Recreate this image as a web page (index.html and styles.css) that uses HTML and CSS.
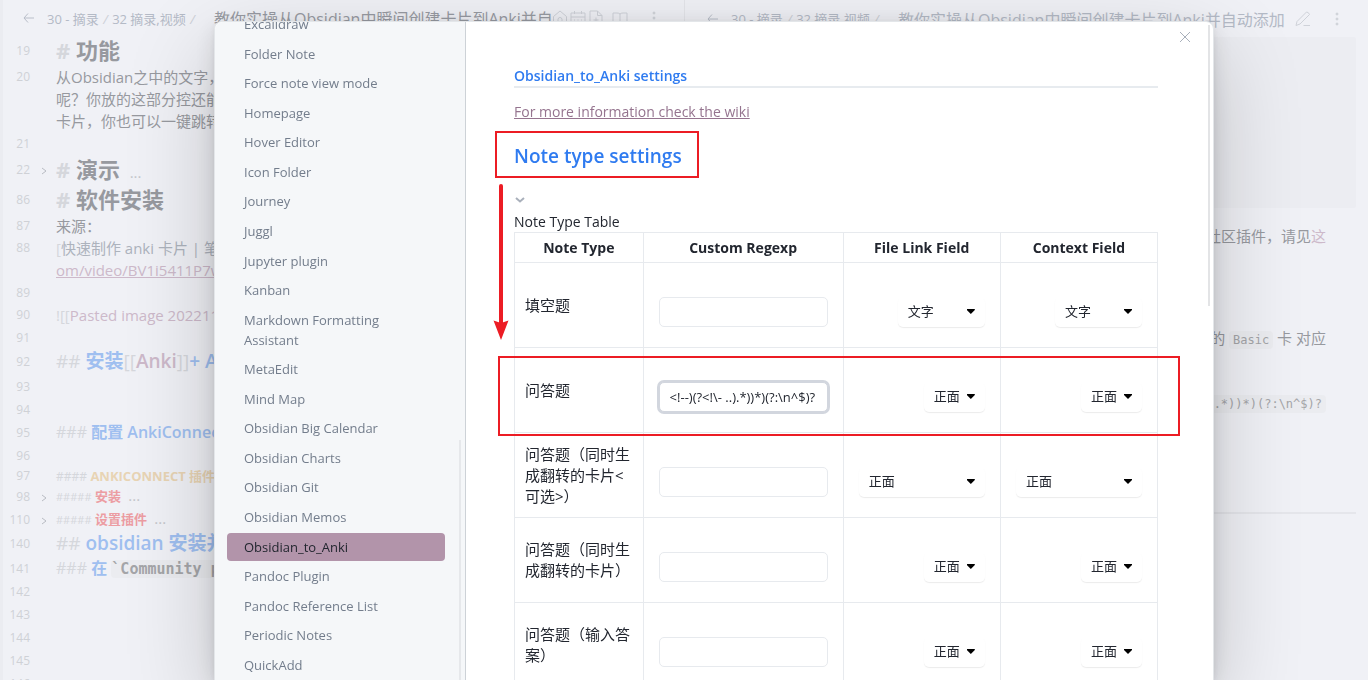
FILE: index.html
```html
<!DOCTYPE html>
<html lang="zh-CN">
<head>
<meta charset="utf-8">
<title>Obsidian_to_Anki settings</title>
<link rel="stylesheet" href="styles.css">
</head>
<body>
<div class="workspace">
  <section class="pane pane-left">
    <header class="pane-head">
      <svg class="icon back" viewBox="0 0 12 12"><path d="M11 6H1M5 1.500L1 6l4 4.500"/></svg>
      <span class="crumbs">30 - 摘录 <i>/</i> 32 摘录,视频 <i>/</i></span>
      <span class="pane-title">教你实操从Obsidian中瞬间创建卡片到Anki并自</span>
      <span class="pane-icons">
        <svg class="icon" viewBox="0 0 16 16"><path d="M1.500 6.500L8 1l6.500 5.500V15h-13zM6 15V9.500a2 2 0 0 1 4 0V15"/></svg>
        <svg class="icon" viewBox="0 0 16 16"><path d="M1 3h14v12H1zM1 7h14M4.500 1v3M11.500 1v3M4 10h1M7.500 10h1M11 10h1M4 12.500h1M7.500 12.500h1"/></svg>
        <svg class="icon" viewBox="0 0 16 16"><path d="M9.500 1H2v14h12V5.500zM9.500 1v4.500H14M8 7.500v5M5.500 10h5"/></svg>
        <svg class="icon book" viewBox="0 0 16 16"><path d="M8 4v11M8 4Q7 3 5 3H1v11h4.500Q7 14 8 15q1-1 2.500-1H15V3h-4Q9 3 8 4z"/></svg>
        <svg class="icon dots" viewBox="0 0 16 16"><circle cx="8" cy="3" r="1"/><circle cx="8" cy="8" r="1"/><circle cx="8" cy="13" r="1"/></svg>
      </span>
    </header>
    <div class="editor">
      <div class="line h1"><span class="num">19</span><p><b>#</b> 功能</p></div>
      <div class="line"><span class="num">20</span><p>从Obsidian之中的文字，<br>呢？你放的这部分控还能<br>卡片，你也可以一键跳转</p></div>
      <div class="line blank"><span class="num">21</span></div>
      <div class="line h1"><span class="num">22</span><svg class="fold" viewBox="0 0 6 8"><path d="M1 1l4 3-4 3"/></svg><p><b>#</b> 演示 <small>...</small></p></div>
      <div class="line h1"><span class="num">86</span><p><b>#</b> 软件安装</p></div>
      <div class="line"><span class="num">87</span><p>来源：</p></div>
      <div class="line link"><span class="num">88</span><p><b>[</b>快速制作 anki 卡片 | 笔记<br><a href="#video">om/video/BV1i5411P7w</a></p></div>
      <div class="line blank"><span class="num">89</span></div>
      <div class="line"><span class="num">90</span><p><b>![[</b><span class="ref">Pasted image 20221120</span></p></div>
      <div class="line blank"><span class="num">91</span></div>
      <div class="line h2"><span class="num">92</span><p><b>##</b> 安装<b>[[</b><span class="ref">Anki</span><b>]]</b>+ Anki</p></div>
      <div class="line blank"><span class="num">93</span></div>
      <div class="line blank"><span class="num">94</span></div>
      <div class="line h3"><span class="num">95</span><p><b>###</b> 配置 AnkiConnect</p></div>
      <div class="line blank"><span class="num">96</span></div>
      <div class="line h4"><span class="num">97</span><p><b>####</b> ANKICONNECT 插件</p></div>
      <div class="line h5"><span class="num">98</span><svg class="fold" viewBox="0 0 6 8"><path d="M1 1l4 3-4 3"/></svg><p><b>#####</b> 安装 <small>...</small></p></div>
      <div class="line h5"><span class="num">110</span><svg class="fold" viewBox="0 0 6 8"><path d="M1 1l4 3-4 3"/></svg><p><b>#####</b> 设置插件 <small>...</small></p></div>
      <div class="line h2"><span class="num">140</span><p><b>##</b> obsidian 安装并</p></div>
      <div class="line h3"><span class="num">141</span><p><b>###</b> 在 <code>`Community p</code></p></div>
      <div class="line blank"><span class="num">142</span></div>
      <div class="line blank"><span class="num">143</span></div>
      <div class="line blank"><span class="num">144</span></div>
      <div class="line blank"><span class="num">145</span></div>
      <div class="line blank"><span class="num">146</span></div>
    </div>
  </section>
  <section class="pane pane-right">
    <header class="pane-head">
      <svg class="icon back" viewBox="0 0 12 12"><path d="M11 6H1M5 1.500L1 6l4 4.500"/></svg>
      <span class="crumbs">30 - 摘录 <i>/</i> 32 摘录,视频 <i>/</i></span>
      <span class="pane-title">教你实操从Obsidian中瞬间创建卡片到Anki并自动添加</span>
      <span class="pane-icons">
        <svg class="icon" viewBox="0 0 16 16"><path d="M1 14.500l1-4L11.500 1q2 0 3 2.500L5 13zM8.500 14.500H15"/></svg>
        <svg class="icon dots" viewBox="0 0 16 16"><circle cx="8" cy="3" r="1"/><circle cx="8" cy="8" r="1"/><circle cx="8" cy="13" r="1"/></svg>
      </span>
    </header>
    <div class="preview">
      <div class="embed"></div>
      <p class="para">社区插件，请见<span class="ref">这</span></p>
      <p class="para">的 <code>Basic</code> 卡 对应</p>
      <p class="para"><code>.*))*)(?:\n^$)?</code></p>
      <hr>
    </div>
  </section>
</div>

<div class="overlay">
  <div class="modal" role="dialog" aria-label="Settings">
    <nav class="sidebar">
      <ul class="plugins">
        <li><a href="#p1">Excalidraw</a></li>
        <li><a href="#p2">Folder Note</a></li>
        <li><a href="#p3">Force note view mode</a></li>
        <li><a href="#p4">Homepage</a></li>
        <li><a href="#p5">Hover Editor</a></li>
        <li><a href="#p6">Icon Folder</a></li>
        <li><a href="#p7">Journey</a></li>
        <li><a href="#p8">Juggl</a></li>
        <li><a href="#p9">Jupyter plugin</a></li>
        <li><a href="#p10">Kanban</a></li>
        <li><a href="#p11">Markdown Formatting<br>Assistant</a></li>
        <li><a href="#p12">MetaEdit</a></li>
        <li><a href="#p13">Mind Map</a></li>
        <li><a href="#p14">Obsidian Big Calendar</a></li>
        <li><a href="#p15">Obsidian Charts</a></li>
        <li><a href="#p16">Obsidian Git</a></li>
        <li><a href="#p17">Obsidian Memos</a></li>
        <li><a href="#p18" class="active">Obsidian_to_Anki</a></li>
        <li><a href="#p19">Pandoc Plugin</a></li>
        <li><a href="#p20">Pandoc Reference List</a></li>
        <li><a href="#p21">Periodic Notes</a></li>
        <li><a href="#p22">QuickAdd</a></li>
      </ul>
      <span class="side-thumb"></span>
    </nav>
    <main class="content">
      <h2 class="title">Obsidian_to_Anki settings</h2>
      <a class="wiki" href="#wiki">For more information check the wiki</a>
      <h3 class="section">Note type settings</h3>
      <button class="collapse" aria-label="Collapse"><svg viewBox="0 0 10 6"><path d="M1 1l4 3.500L9 1"/></svg></button>
      <table class="types">
        <caption>Note Type Table</caption>
        <colgroup><col class="c-type"><col class="c-regexp"><col><col></colgroup>
        <thead><tr><th>Note Type</th><th>Custom Regexp</th><th>File Link Field</th><th>Context Field</th></tr></thead>
        <tbody>
          <tr><td>填空题</td><td class="ctl"><input type="text" aria-label="填空题 regexp"></td>
            <td class="ctl"><span class="drop mid"><select aria-label="File link"><option>文字</option></select></span></td>
            <td class="ctl"><span class="drop mid"><select aria-label="Context"><option>文字</option></select></span></td></tr>
          <tr><td>问答题</td><td class="ctl"><input class="focus" type="text" aria-label="问答题 regexp" value="&lt;!--)(?&lt;!\- ..).*))*)(?:\n^$)?"></td>
            <td class="ctl"><span class="drop"><select aria-label="File link"><option>正面</option></select></span></td>
            <td class="ctl"><span class="drop"><select aria-label="Context"><option>正面</option></select></span></td></tr>
          <tr><td>问答题（同时生成翻转的卡片&lt;可选&gt;）</td><td class="ctl"><input type="text" aria-label="可选 regexp"></td>
            <td class="ctl"><span class="drop wide"><select aria-label="File link"><option>正面</option></select></span></td>
            <td class="ctl"><span class="drop wide"><select aria-label="Context"><option>正面</option></select></span></td></tr>
          <tr><td>问答题（同时生成翻转的卡片）</td><td class="ctl"><input type="text" aria-label="翻转 regexp"></td>
            <td class="ctl"><span class="drop"><select aria-label="File link"><option>正面</option></select></span></td>
            <td class="ctl"><span class="drop"><select aria-label="Context"><option>正面</option></select></span></td></tr>
          <tr><td>问答题（输入答案）</td><td class="ctl"><input type="text" aria-label="输入 regexp"></td>
            <td class="ctl"><span class="drop"><select aria-label="File link"><option>正面</option></select></span></td>
            <td class="ctl"><span class="drop"><select aria-label="Context"><option>正面</option></select></span></td></tr>
        </tbody>
      </table>
    </main>
    <button class="close" aria-label="Close"><svg viewBox="0 0 12 12"><path d="M1 1l10 10M11 1L1 11"/></svg></button>
    <span class="main-thumb"></span>
    <span class="mark mark-title"></span>
    <span class="mark mark-row"></span>
    <svg class="mark-arrow" viewBox="0 0 16 156"><path d="M8 2v140" stroke-width="4" stroke-linecap="round"/><path class="head" d="M0.500 136.500L8 139l7.500-2.500L8 156z"/></svg>
  </div>
</div>
</body>
</html>
```

FILE: styles.css
```css
* { box-sizing: border-box; }

body {
  margin: 0;
  height: 100vh;
  overflow: hidden;
  background: #f0f1f6;
  color: #22262f;
  font-family: "Open Sans", "Noto Sans CJK SC", sans-serif;
  font-size: 15px;
}

p, ul { margin: 0; padding: 0; }
svg { display: block; fill: none; stroke: currentColor; }

/* Workspace behind the dialog */
.workspace {
  display: grid;
  grid-template-columns: 1fr 1fr;
  height: 100vh;
  color: #97999f;
}
.pane { min-width: 0; overflow: hidden; }
.pane-left { border-left: 3px solid #ebecf1; }
.pane-right { border-left: 1px solid #e4e5ea; }
.pane-head {
  display: flex;
  align-items: center;
  height: 36px;
  padding: 0 20px;
  white-space: nowrap;
  color: #b4bac6;
}
.pane-right .pane-head { height: 37px; padding: 0 22px; }
.icon { width: 16px; height: 16px; flex: none; color: #cfd2d9; }
.icon.back { width: 12px; height: 12px; color: #b9bec9; }
.crumbs { margin-left: 12px; width: 167px; flex: none; font-size: 13px; }
.crumbs i { margin: 0 1px; color: #cdd0d7; }
.pane-title { font-size: 16px; overflow: hidden; }
.pane-left .pane-title { width: 338px; flex: none; color: #989ba3; }
.pane-icons { display: flex; gap: 2px; }
.pane-icons .book { margin-left: 6px; }
.pane-icons .dots { margin-left: 16px; fill: currentColor; }
.pane-right .pane-icons { margin-left: 10px; }

.editor { width: 400px; white-space: nowrap; }
.line { display: flex; position: relative; line-height: 22px; padding-left: 53px; }
.num {
  position: absolute;
  left: 0;
  top: 0;
  bottom: 0;
  display: flex;
  align-items: center;
  justify-content: flex-end;
  width: 27px;
  max-height: 30px;
  font-size: 12px;
  font-weight: 400;
  color: #cfd1d6;
}
.line:not([class*=" "]) .num, .link .num { max-height: 22px; }
.line b { font-weight: inherit; color: #d5d7dc; }
.line small { margin-left: 4px; font-size: 15px; line-height: 1; color: #c4c6cb; font-weight: 400; }
.blank { height: 23px; }
.fold { position: absolute; left: 38px; top: 50%; width: 6px; height: 8px; margin-top: -3px; color: #b9bcc3; }
.h1 { height: 30px; line-height: 28px; font-size: 22px; font-weight: 700; }
.h2 { height: 26px; line-height: 24px; font-size: 19px; font-weight: 600; color: #9fbff0; }
.h3 { height: 23px; line-height: 22px; font-size: 16px; font-weight: 600; color: #9fbff0; }
.h4 { height: 18px; line-height: 18px; font-size: 13px; font-weight: 700; color: #e8d4b4; }
.h5 { height: 23px; line-height: 22px; font-size: 13px; font-weight: 600; color: #ec9da3; }
.h2 b, .h3 b, .h4 b, .h5 b { font-weight: 400; }
.h4 b { font-size: 12px; }
.h5 b { font-size: 11px; }
.link { color: #adb3bd; }
.ref, .line a { color: #cdb9ca; }
code { font-family: "DejaVu Sans Mono", monospace; color: #a4a5a8; background: #ebecf0; border-radius: 4px; }
.h3 code { font-size: 15px; font-weight: 700; }

.preview { padding-right: 12px; text-align: right; line-height: 24px; }
.embed { height: 171px; background: #ecedf2; margin-bottom: 16px; border-radius: 2px; }
.para { padding-right: 30px; }
.para + .para { margin-top: 78px; }
.para + .para + .para { margin-top: 38px; }
.para code { padding: 2px 4px; font-size: 12px; }
hr { margin: 96px 0 0; border: 0; border-top: 2px solid #e5e6eb; }

/* Settings dialog */
.overlay { position: fixed; inset: 0; display: flex; padding: 21px 154px 0 214px; }
.modal {
  position: relative;
  display: flex;
  flex: 1;
  min-width: 0;
  background: #fff;
  border: 1px solid #e3e6e9;
  border-bottom: 0;
  border-radius: 8px 8px 0 0;
  box-shadow: 0 2px 7px rgba(0, 0, 0, .07), 0 6px 25px rgba(0, 0, 0, .11), 0 30px 90px rgba(0, 0, 0, .2);
}
.sidebar {
  position: relative;
  display: flex;
  width: 251px;
  flex: none;
  overflow: hidden;
  background: #f5f7f9;
  border-right: 1px solid #cdd2d7;
  border-radius: 8px 0 0 0;
}
.plugins {
  display: flex;
  flex: 1;
  flex-direction: column;
  justify-content: space-between;
  margin: -12px 20px 1px 12px;
  list-style: none;
  font-size: 13px;
  line-height: 20px;
}
.plugins a {
  display: block;
  padding: 4px 17px;
  border-radius: 4px;
  color: #737d8c;
  text-decoration: none;
}
.plugins .active { background: #b294aa; color: #22262f; }
.side-thumb { position: absolute; right: 4px; top: 418px; bottom: 0; width: 2px; background: #e6e8eb; }

.content { flex: 1; min-width: 0; overflow: hidden; padding: 44px 55px 0 48px; }
.title {
  margin: 0 0 14px;
  border-bottom: 2px solid #e7ebef;
  color: #2f7bf0;
  font-size: 14px;
  font-weight: 600;
  line-height: 20px;
}
.wiki { display: table; color: #95748f; font-size: 14px; line-height: 20px; }
.section { margin: 19px 0 0; color: #2f7bf0; font-size: 19px; font-weight: 600; line-height: 30px; }
.collapse, .close { padding: 0; border: 0; background: none; color: #a9b0bb; }
.collapse { display: block; margin: 26px 0 9px 1px; }
.collapse svg { width: 10px; height: 6px; stroke-width: 2; }

.types { width: 100%; border-collapse: collapse; table-layout: fixed; line-height: 21px; }
.types caption { text-align: left; font-size: 14px; line-height: 20px; }
.c-type { width: 20%; }
.c-regexp { width: 200px; }
.types th, .types td { border: 1px solid #e7eaee; }
.types th { height: 30px; padding: 0; font-size: 14px; font-weight: 700; }
.types td { height: 85px; padding: 0 10px; text-align: left; }
.types .ctl { padding: 14px 15px 0; text-align: right; }
input {
  display: block;
  width: 100%;
  height: 30px;
  padding: 0 10px;
  border: 1px solid #e7eaee;
  border-radius: 5px;
  background: #fff;
  color: #22262f;
  font: 13px "Open Sans", sans-serif;
}
input.focus { border-color: #d2d6de; box-shadow: 0 0 0 2px #d2d6de; }
.drop { position: relative; display: inline-block; width: 61px; vertical-align: middle; }
.drop.mid { width: 87px; }
.drop.wide { width: 126px; }
.drop::after {
  content: "";
  position: absolute;
  right: 10px;
  top: 12px;
  width: 8px;
  height: 5px;
  background: #000;
  clip-path: polygon(0 0, 100% 0, 100% 20%, 50% 100%, 0 20%);
}
select {
  display: block;
  width: 100%;
  height: 30px;
  padding: 0 10px 3px;
  appearance: none;
  border: 0;
  border-radius: 5px;
  background: #fff;
  box-shadow: 0 1px 1px rgba(0, 0, 0, .08);
  color: #22262f;
  font: 13px "Noto Sans CJK SC", sans-serif;
}

.close { position: absolute; top: 9px; right: 22px; }
.close svg { width: 12px; height: 12px; }
.main-thumb { position: absolute; top: 3px; right: 3px; width: 2px; height: 281px; background: #e3e4e6; }

/* Annotations drawn over the dialog */
.mark { position: absolute; border: 2px solid #ec1c24; pointer-events: none; }
.mark-title { left: 280px; top: 109px; width: 204px; height: 47px; }
.mark-row { left: 283px; right: 33px; top: 334px; height: 80px; }
.mark-arrow { position: absolute; left: 278px; top: 162px; width: 16px; height: 156px; color: #ec1c24; }
.mark-arrow .head { fill: currentColor; stroke: none; }
```
